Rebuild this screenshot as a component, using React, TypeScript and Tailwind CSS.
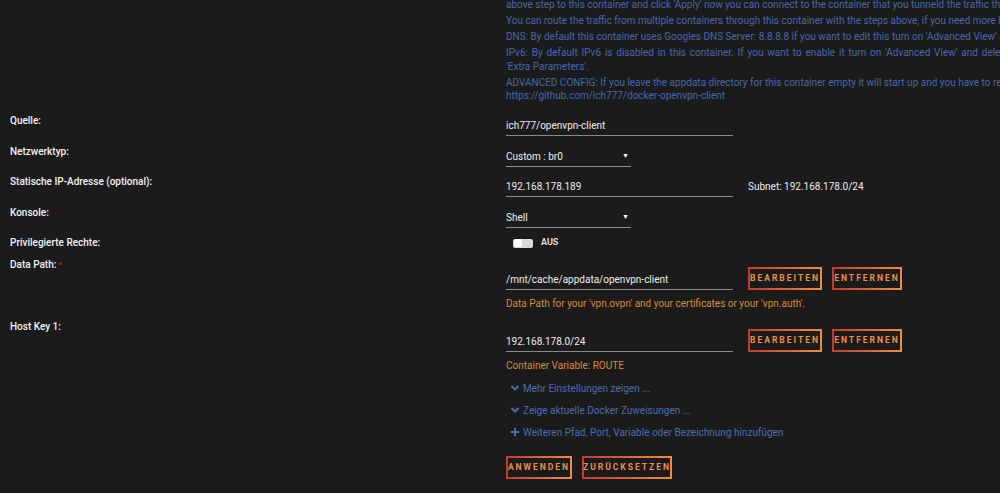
import { ChevronDown, Plus } from 'lucide-react';

const font = { fontFamily: 'Roboto, "Open Sans", "Liberation Sans", sans-serif' };

function GradButton({ label, w }: { label: string; w: string }) {
  return (
    <button
      className={`${w} h-[23px] border-2 border-solid [border-image:linear-gradient(90deg,#c73a30,#ef8b3f)_1] bg-transparent text-[8.5px] font-bold tracking-[2px] text-[#e8904a] flex items-center justify-center`}
    >
      {label}
    </button>
  );
}

function TextInput({ value }: { value: string }) {
  return (
    <div className="w-[227px] h-[22px] border-b border-[#8a8a8a] flex items-center pt-[1px] text-[10px] text-[#ececec]">
      {value}
    </div>
  );
}

function SelectInput({ value }: { value: string }) {
  return (
    <div className="w-[125px] h-[22px] border-b border-[#8a8a8a] flex items-center justify-between pr-[2px] pt-[1px] text-[10px] text-[#ececec]">
      <span>{value}</span>
      <span className="text-[7px] text-white">▼</span>
    </div>
  );
}

function Label({ text, required }: { text: string; required?: boolean }) {
  return (
    <div className="pl-[10px] text-[10px] font-medium leading-[14px] text-[#f2f2f2]">
      {text}
      {required && <span className="text-[#c0282d] ml-[2px] align-top text-[8px]">*</span>}
    </div>
  );
}

export default function App() {
  return (
    <div className="w-[1000px] h-[493px] overflow-hidden bg-[#1c1b1c]" style={font}>
      {/* Beschreibung oben */}
      <div className="ml-[506px] mt-[-2px] text-[10px] leading-[14px] text-[#4667ad] whitespace-nowrap">
        <div className="mb-[2px]">above step to this container and click 'Apply' now you can connect to the container that you tunneld the traffic through</div>
        <div className="mb-[2px]">You can route the traffic from multiple containers through this container with the steps above, if you need more help</div>
        <div className="mb-[2px]">DNS: By default this container uses Googles DNS Server: 8.8.8.8 if you want to edit this turn on 'Advanced View' and</div>
        <div className="w-[503px] [text-align-last:justify]">IPv6: By default IPv6 is disabled in this container. If you want to enable it turn on 'Advanced View' and delete</div>
        <div className="mb-[2px]">'Extra Parameters'.</div>
        <div className="h-[13px]">ADVANCED CONFIG: If you leave the appdata directory for this container empty it will start up and you have to restart</div>
        <div>https://github.com/ich777/docker-openvpn-client</div>
      </div>

      <div className="mt-[11px]">
        {/* Quelle */}
        <div className="grid grid-cols-[506px_1fr] h-[31px]">
          <Label text="Quelle:" />
          <TextInput value="ich777/openvpn-client" />
        </div>

        {/* Netzwerktyp */}
        <div className="grid grid-cols-[506px_1fr] h-[30px]">
          <Label text="Netzwerktyp:" />
          <SelectInput value="Custom : br0" />
        </div>

        {/* Statische IP */}
        <div className="grid grid-cols-[506px_1fr] h-[31px]">
          <Label text="Statische IP-Adresse (optional):" />
          <div className="flex items-center gap-[15px] h-[22px]">
            <TextInput value="192.168.178.189" />
            <span className="text-[10px] text-[#ececec] pt-[1px]">Subnet: 192.168.178.0/24</span>
          </div>
        </div>

        {/* Konsole */}
        <div className="grid grid-cols-[506px_1fr] h-[30px]">
          <Label text="Konsole:" />
          <SelectInput value="Shell" />
        </div>

        {/* Privilegierte Rechte */}
        <div className="grid grid-cols-[506px_1fr] h-[22px]">
          <Label text="Privilegierte Rechte:" />
          <div className="flex items-center gap-[8px] pl-[7px] h-[14px]">
            <div className="w-[20px] h-[9px] rounded-[2px] bg-[#d9d9d9] flex items-center pl-[1px]">
              <div className="w-[8px] h-[8px] rounded-[2px] bg-white" />
            </div>
            <span className="text-[9px] font-semibold text-[#e8e8e8]">AUS</span>
          </div>
        </div>

        {/* Data Path */}
        <div className="grid grid-cols-[506px_1fr] h-[62px]">
          <Label text="Data Path:" required />
          <div className="pt-[9px]">
            <div className="flex items-end gap-[15px]">
              <TextInput value="/mnt/cache/appdata/openvpn-client" />
              <div className="flex gap-[10px]">
                <GradButton label="BEARBEITEN" w="w-[74px]" />
                <GradButton label="ENTFERNEN" w="w-[70px]" />
              </div>
            </div>
            <p className="mt-[7px] text-[10px] leading-[14px] text-[#d98a2f]">
              Data Path for your 'vpn.ovpn' and your certificates or your 'vpn.auth'.
            </p>
          </div>
        </div>

        {/* Host Key 1 */}
        <div className="grid grid-cols-[506px_1fr]">
          <Label text="Host Key 1:" />
          <div className="pt-[9px]">
            <div className="flex items-end gap-[15px]">
              <TextInput value="192.168.178.0/24" />
              <div className="flex gap-[10px]">
                <GradButton label="BEARBEITEN" w="w-[74px]" />
                <GradButton label="ENTFERNEN" w="w-[70px]" />
              </div>
            </div>
            <p className="mt-[7px] text-[10px] leading-[14px] text-[#d98a2f]">Container Variable: ROUTE</p>

            <div className="mt-[4px] flex flex-col text-[10px] text-[#4a6cb3]">
              <div className="h-[22px] flex items-center gap-[2px] pl-[3px]">
                <ChevronDown size={12} strokeWidth={4} />
                <span>Mehr Einstellungen zeigen ...</span>
              </div>
              <div className="h-[22px] flex items-center gap-[2px] pl-[3px]">
                <ChevronDown size={12} strokeWidth={4} />
                <span>Zeige aktuelle Docker Zuweisungen ...</span>
              </div>
              <div className="h-[22px] flex items-center gap-[2px] pl-[3px]">
                <Plus size={12} strokeWidth={4} />
                <span>Weiteren Pfad, Port, Variable oder Bezeichnung hinzufügen</span>
              </div>
            </div>

            <div className="mt-[13px] flex gap-[10px]">
              <GradButton label="ANWENDEN" w="w-[66px]" />
              <GradButton label="ZURÜCKSETZEN" w="w-[90px]" />
            </div>
          </div>
        </div>
      </div>
    </div>
  );
}
